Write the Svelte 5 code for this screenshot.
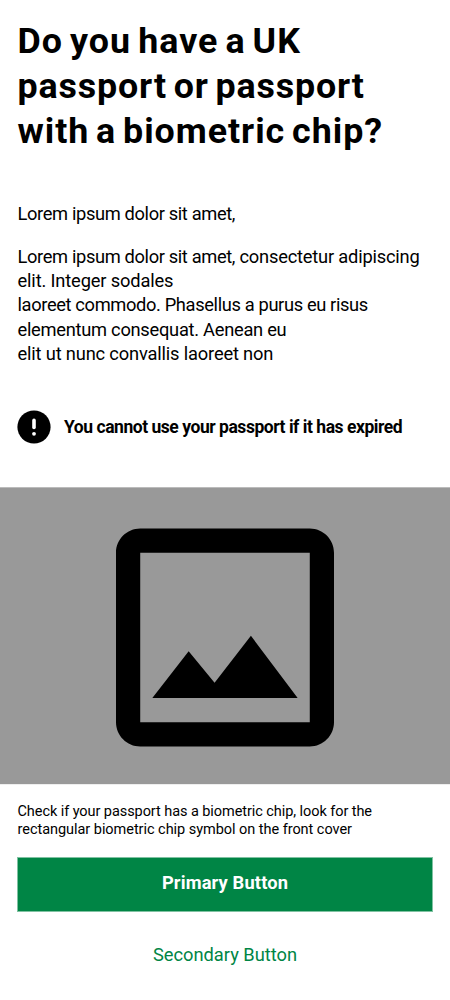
<script>
  const title = [
    [{ text: 'Do you have a UK', spacing: 1.05 }],
    [{ text: 'passport or passport', spacing: 0.86 }],
    [{ text: 'with a biometric chip?', spacing: 0.96 }],
  ];
  const intro = [[{ text: 'Lorem ipsum dolor sit amet,', spacing: -0.36 }]];
  const body = [
    [
      { text: 'Lorem ipsum dolor sit amet,', spacing: -0.36 },
      { text: ' consectetur adipiscing', spacing: -0.2 },
    ],
    [{ text: 'elit. Integer sodales', spacing: -0.15 }],
    [{ text: 'laoreet commodo. Phasellus a purus eu risus', spacing: -0.36 }],
    [{ text: 'elementum consequat. Aenean eu', spacing: -0.27 }],
    [{ text: 'elit ut nunc convallis laoreet non', spacing: -0.17 }],
  ];
  const caption = [
    [{ text: 'Check if your passport has a biometric chip, look for the', spacing: -0.07 }],
    [{ text: 'rectangular biometric chip symbol on the front cover', spacing: -0.04 }],
  ];
</script>

{#snippet lines(items)}
  {#each items as parts}
    <span class="line">{#each parts as part}<span style="letter-spacing: {part.spacing}px">{part.text}</span>{/each}</span>
  {/each}
{/snippet}

<main>
  <h1>{@render lines(title)}</h1>
  <p class="intro">{@render lines(intro)}</p>
  <p class="body">{@render lines(body)}</p>

  <div class="warning">
    <svg viewBox="0 0 34 34" aria-hidden="true">
      <circle cx="17" cy="17" r="16.6" />
      <path d="M17 10.4v7" stroke="#fff" stroke-width="3.6" stroke-linecap="round" />
      <circle cx="17" cy="23.8" r="1.9" fill="#fff" />
    </svg>
    <strong>You cannot use your passport if it has expired</strong>
  </div>

  <div class="picture">
    <svg viewBox="0 0 18 18" aria-hidden="true">
      <path d="M16 2v14H2V2h14m0-2H2C.9 0 0 .9 0 2v14c0 1.1.9 2 2 2h14c1.1 0 2-.9 2-2V2c0-1.1-.9-2-2-2zm-4.860 8.860l-3 3.870L6 10.140 3 14h12l-3.860-5.140z" />
    </svg>
  </div>

  <p class="caption">{@render lines(caption)}</p>
  <button class="primary">Primary Button</button>
  <button class="secondary">Secondary Button</button>
</main>

<style>
  :global(body) {
    margin: 0;
    background: #fff;
  }
  main {
    box-sizing: border-box;
    height: 1000px;
    overflow: hidden;
    display: flex;
    flex-direction: column;
    padding-top: 19px;
    color: #000;
    font-family: Roboto, 'Liberation Sans', sans-serif;
  }
  h1,
  p {
    margin: 0 17.5px;
    white-space: nowrap;
  }
  .line {
    display: block;
    width: max-content;
    white-space: pre;
  }
  h1 {
    font-size: 35.8px;
    line-height: 45px;
    font-weight: 700;
    word-spacing: -3px;
  }
  .intro,
  .body {
    font-size: 18.3px;
    line-height: 24px;
  }
  .intro {
    margin-top: 48px;
  }
  .body {
    margin-top: 19px;
    line-height: 24.2px;
  }
  .warning {
    display: flex;
    align-items: center;
    gap: 13px;
    height: 34px;
    margin: 44px 17px 0;
    white-space: nowrap;
  }
  .warning svg {
    flex: none;
    width: 34px;
    height: 34px;
  }
  strong {
    padding-bottom: 1px;
    font-size: 17.5px;
    line-height: 24px;
    font-weight: 700;
    letter-spacing: -0.46px;
  }
  .picture {
    flex: none;
    display: flex;
    justify-content: center;
    box-sizing: border-box;
    height: 298px;
    margin-top: 43px;
    padding-top: 40px;
    border-top: 1px solid #bbb;
    border-bottom: 1px solid #eee;
    background: #999;
  }
  .picture svg {
    width: 218px;
    height: 219px;
  }
  .caption {
    margin-top: 18px;
    font-size: 14.5px;
    line-height: 17.7px;
  }
  button {
    border: 0;
    padding: 0;
    background: none;
    font-family: inherit;
    font-size: 18.3px;
    line-height: 24px;
  }
  .primary {
    flex: none;
    box-sizing: border-box;
    height: 55px;
    margin: 18.6px 17px 0;
    padding-bottom: 3px;
    border: 1px solid #80c2a2;
    background: #008545;
    background-clip: padding-box;
    color: #fff;
    font-weight: 700;
    letter-spacing: 0.15px;
  }
  .secondary {
    align-self: center;
    margin-top: 31px;
    color: #008545;
  }
</style>
